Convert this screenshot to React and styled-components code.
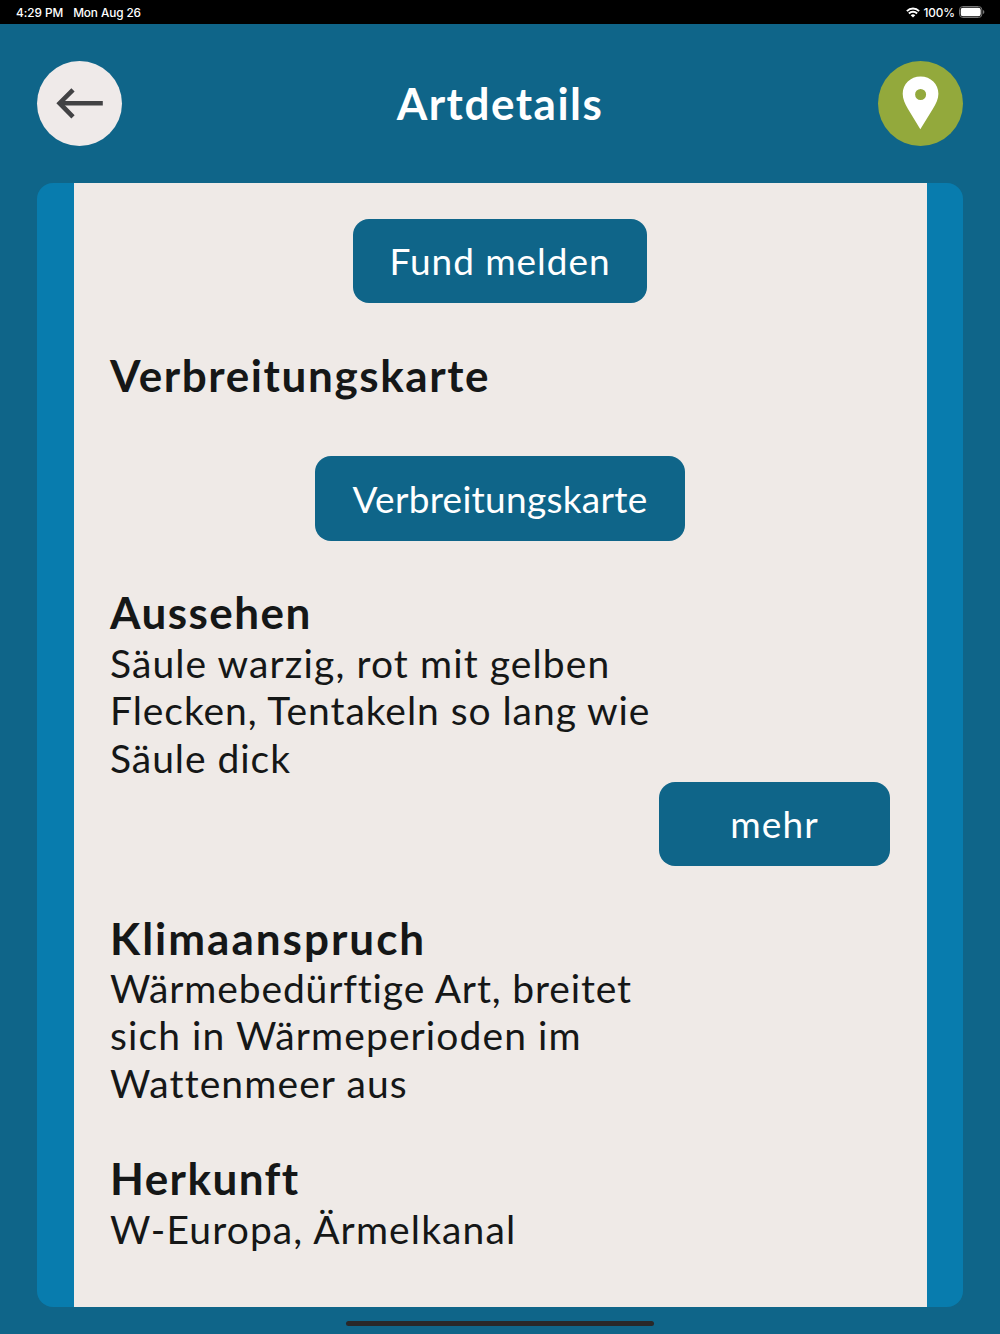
import React from "react";
import styled, { createGlobalStyle } from "styled-components";

const colors = {
  petrol: "#0f6589",
  stripe: "#087cae",
  cream: "#efeae7",
  ink: "#151717",
  green: "#93a93c",
};

const GlobalStyle = createGlobalStyle`
  * { box-sizing: border-box; }
  body {
    margin: 0;
    background: ${colors.petrol};
    font-family: Lato, "Open Sans", sans-serif;
  }
`;

const Screen = styled.div`
  display: flex;
  flex-direction: column;
  width: 1000px;
  height: 1334px;
  overflow: hidden;
  background: ${colors.petrol};
`;

const StatusBar = styled.div`
  flex: none;
  display: flex;
  justify-content: space-between;
  align-items: center;
  height: 23.6px;
  padding: 1px 15px 0 16px;
  background: #000;
  color: #fff;
  font: 500 11.8px/22px Inter, sans-serif;
`;

const StatusGroup = styled.div`
  display: flex;
  align-items: center;
  gap: ${(p) => p.$gap}px;
`;

const StatusText = styled.span`
  padding-top: 1px;
  letter-spacing: ${(p) => p.$tracking || 0}px;
`;

const Header = styled.header`
  flex: none;
  display: flex;
  justify-content: space-between;
  align-items: center;
  height: 159px;
  padding: 0 37.3px;
`;

const RoundButton = styled.button`
  display: block;
  width: 85px;
  height: 85px;
  padding: 0;
  border: 0;
  border-radius: 50%;
  background: ${(p) => p.$color};

  svg {
    display: block;
  }
`;

const Title = styled.h1`
  margin: 0;
  color: #fff;
  font-size: 44px;
  font-weight: 700;
  line-height: 53px;
  letter-spacing: 1.5px;
`;

const Panel = styled.main`
  flex: none;
  height: 1124.4px;
  margin: 0 37px;
  padding: 0 36.5px;
  border-radius: 16px;
  background: ${colors.stripe};
`;

const Content = styled.div`
  display: flex;
  flex-direction: column;
  height: 100%;
  padding: 36px 36.5px 0;
  background: ${colors.cream};
  color: ${colors.ink};
`;

const ActionButton = styled.button`
  flex: none;
  align-self: ${(p) => p.$align || "center"};
  width: ${(p) => p.$width}px;
  height: 84.7px;
  margin-top: ${(p) => p.$top || 0}px;
  padding: 0;
  border: 0;
  border-radius: 16px;
  background: ${colors.petrol};
  color: #fff;
  font: 400 37px/44px Lato, sans-serif;
  letter-spacing: ${(p) => p.$tracking}px;
`;

const Section = styled.section`
  display: flex;
  flex-direction: column;
  margin-top: ${(p) => p.$top}px;
`;

const Heading = styled.h2`
  margin: 0;
  font-size: 44px;
  font-weight: 700;
  line-height: 54.4px;
  letter-spacing: ${(p) => p.$tracking}px;
`;

const Text = styled.p`
  margin: 0;
  font-size: 39px;
  line-height: 47.5px;
`;

const TextLine = styled.span`
  display: block;
  white-space: nowrap;
  letter-spacing: ${(p) => p.$tracking}px;
`;

const HomeBar = styled.div`
  flex: none;
  align-self: center;
  width: 308px;
  height: 5.4px;
  margin-top: 13.8px;
  border-radius: 3px;
  background: #292829;
`;

function WifiIcon() {
  return (
    <svg width="14" height="11" viewBox="0 0 14 11" fill="none" stroke="#fff" strokeWidth="2">
      <path d="M0.9 4.1 A8.7 8.7 0 0 1 13.1 4.1" />
      <path d="M2.9 6.5 A5.8 5.8 0 0 1 11.1 6.5" />
      <path d="M7 10.6 L4.7 8.3 A3.3 3.3 0 0 1 9.3 8.3 Z" fill="#fff" stroke="none" />
    </svg>
  );
}

function BatteryIcon() {
  return (
    <svg width="26" height="12" viewBox="0 0 26 12">
      <rect x="0.5" y="0.5" width="22.4" height="11" rx="3.4" fill="none" stroke="#767676" />
      <rect x="1.7" y="1.8" width="20" height="8.4" rx="2.2" fill="#fff" />
      <path d="M24 4 Q25.4 4.6 25.4 6 Q25.4 7.4 24 8 Z" fill="#767676" />
    </svg>
  );
}

function ArrowIcon() {
  return (
    <svg width="85" height="85" viewBox="0 0 85 85" fill="none" stroke="#424244" strokeWidth="4.6">
      <path d="M65.8 42.2 H24" />
      <path d="M36 28.8 L22.6 42.2 L36 55.8" />
    </svg>
  );
}

function PinIcon() {
  return (
    <svg width="85" height="85" viewBox="0 0 85 85">
      <path
        fill="#fff"
        fillRule="evenodd"
        d="M42.6 15.4 C32.4 15.4 24.7 23 24.7 32.8 C24.7 37.8 26.8 42.8 30 48 L42.3 68.2 L54.8 48 C58.2 42.8 60.4 37.8 60.4 32.8 C60.4 23 52.8 15.4 42.6 15.4 Z M42.6 28 A5.5 5.5 0 1 1 42.6 39 A5.5 5.5 0 1 1 42.6 28 Z"
      />
    </svg>
  );
}

export default function App() {
  return (
    <Screen>
      <GlobalStyle />
      <StatusBar>
        <StatusGroup $gap={10}>
          <StatusText $tracking={-0.05}>4:29 PM</StatusText>
          <StatusText $tracking={-0.1}>Mon Aug 26</StatusText>
        </StatusGroup>
        <StatusGroup $gap={4}>
          <WifiIcon />
          <StatusText $tracking={-0.1}>100%</StatusText>
          <BatteryIcon />
        </StatusGroup>
      </StatusBar>
      <Header>
        <RoundButton $color="#efeae9" aria-label="Zurück">
          <ArrowIcon />
        </RoundButton>
        <Title>Artdetails</Title>
        <RoundButton $color={colors.green} aria-label="Standort">
          <PinIcon />
        </RoundButton>
      </Header>
      <Panel>
        <Content>
          <ActionButton $width={294} $tracking={0.95}>Fund melden</ActionButton>
          <Section $top={44.3}>
            <Heading $tracking={1.6}>Verbreitungskarte</Heading>
            <ActionButton $width={370} $top={54.2} $tracking={0.27}>Verbreitungskarte</ActionButton>
          </Section>
          <Section $top={44.6}>
            <Heading $tracking={1.45}>Aussehen</Heading>
            <Text>
              <TextLine $tracking={1.1}>Säule warzig, rot mit gelben</TextLine>
              <TextLine $tracking={0.94}>Flecken, Tentakeln so lang wie</TextLine>
              <TextLine $tracking={0.95}>Säule dick</TextLine>
            </Text>
            <ActionButton $width={231} $top={-0.7} $tracking={1.1} $align="flex-end">mehr</ActionButton>
          </Section>
          <Section $top={44.2}>
            <Heading $tracking={2}>Klimaanspruch</Heading>
            <Text>
              <TextLine $tracking={0.86}>Wärmebedürftige Art, breitet</TextLine>
              <TextLine $tracking={1.1}>sich in Wärmeperioden im</TextLine>
              <TextLine $tracking={1.12}>Wattenmeer aus</TextLine>
            </Text>
          </Section>
          <Section $top={44}>
            <Heading $tracking={1.45}>Herkunft</Heading>
            <Text>
              <TextLine $tracking={1.12}>W-Europa, Ärmelkanal</TextLine>
            </Text>
          </Section>
        </Content>
      </Panel>
      <HomeBar />
    </Screen>
  );
}
